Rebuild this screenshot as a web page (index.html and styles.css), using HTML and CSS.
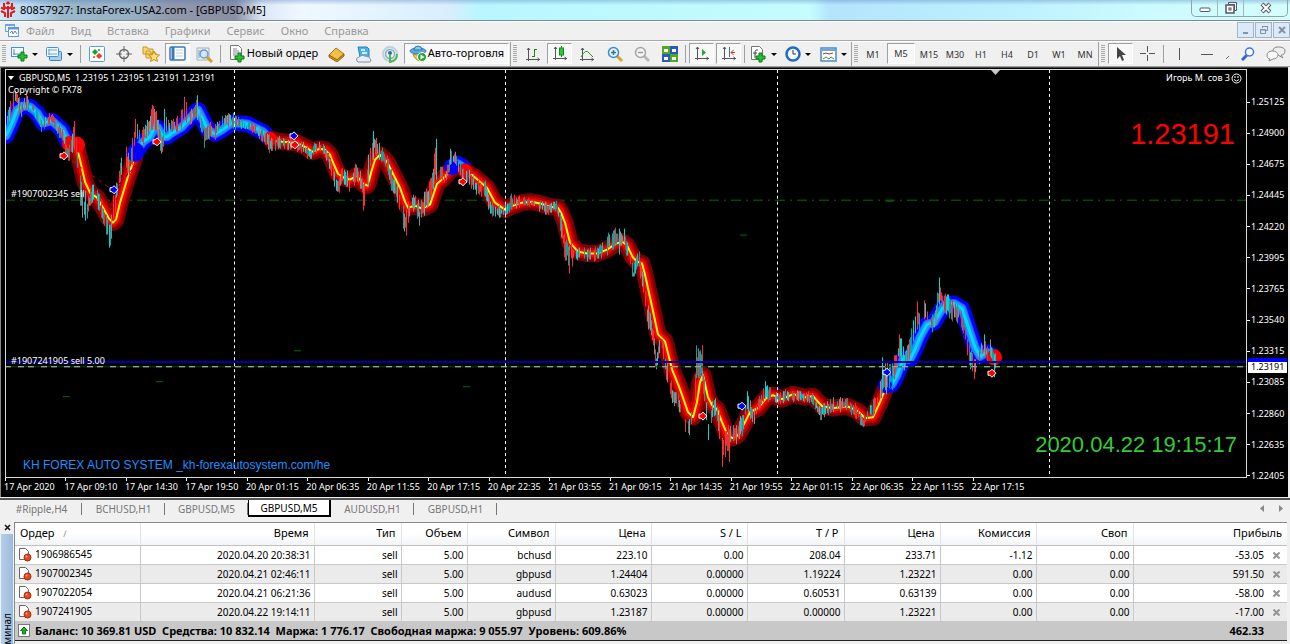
FILE: index.html
```html
<!DOCTYPE html>
<html lang="ru">
<head>
<meta charset="utf-8">
<title>80857927: InstaForex-USA2.com - [GBPUSD,M5]</title>
<link rel="stylesheet" href="styles.css">
</head>
<body>
<div class="app">
  <header class="titlebar">
    <svg class="logo" width="16" height="18" viewBox="0 0 16 18"><g fill="none" stroke="#e01818" stroke-width="2"><path d="M8 5v12M5 16v-4L1 10M11 16v-4l4-2M8 8L4 5.500V2M8 8l4-2.500V2M1 6.500l4 2M15 6.500l-4 2M6.500 3L8 1.500 9.500 3"/></g></svg>
    <h1 class="title">80857927: InstaForex-USA2.com - [GBPUSD,M5]</h1>
    <div class="winbtns">
      <button class="wb" aria-label="Свернуть"><svg width="12" height="10" viewBox="0 0 12 10"><rect x="1" y="5" width="10" height="3.500" rx="1" fill="#fff" stroke="#556"/></svg></button>
      <button class="wb" aria-label="Восстановить"><svg width="12" height="12" viewBox="0 0 12 12"><path d="M3.500 .5h8v8h-2v-6h-6z" fill="#fff" stroke="#556"/><rect x="1" y="3" width="8" height="8" fill="#fff" stroke="#556" stroke-width="1.500"/><rect x="4" y="6" width="2" height="2" fill="none" stroke="#556"/></svg></button>
      <button class="wb wide" aria-label="Закрыть"><svg width="12" height="12" viewBox="0 0 12 12"><path d="M2 2l8 8M10 2l-8 8" stroke="#556" stroke-width="4"/><path d="M2.500 2.500l7 7M9.500 2.500l-7 7" stroke="#fff" stroke-width="2"/></svg></button>
    </div>
  </header>

  <nav class="menubar">
    <svg width="15" height="15" viewBox="0 0 15 15"><rect x="1.500" y="1.500" width="9" height="7" fill="#eef5ff" stroke="#6ea4e0"/><path d="M1 2h10" stroke="#6ea4e0" stroke-width="2"/><rect x="4.500" y="4.500" width="10" height="9" fill="#fff" stroke="#5b98dc"/><path d="M4 5.500h11" stroke="#5b98dc" stroke-width="2"/><path d="M6 10l2-2 1 3 2-3 2 3" fill="none" stroke="#4a88d0"/></svg>
    <button>Файл</button><button>Вид</button><button>Вставка</button><button>Графики</button><button>Сервис</button><button>Окно</button><button>Справка</button>
    <div class="mdi">
      <button aria-label="Свернуть окно"><svg width="10" height="10" viewBox="0 0 10 10"><path d="M2 8h5" stroke="#8193a8" stroke-width="2"/></svg></button>
      <button aria-label="Восстановить окно"><svg width="10" height="10" viewBox="0 0 10 10"><path d="M3.500 3V1.500h5v4H7M3 1.500h6M1.500 4.500h5v4h-5zM1 5h6" fill="none" stroke="#8193a8"/></svg></button>
      <button aria-label="Закрыть окно"><svg width="10" height="10" viewBox="0 0 10 10"><path d="M2 2l6 6M8 2L2 8" stroke="#8193a8" stroke-width="2"/></svg></button>
    </div>
  </nav>

  <div class="toolbar">
    <div class="group g1"><i class="grip"></i>
      <button class="drop" aria-label="Новый график"><svg width="18" height="16" viewBox="0 0 18 16"><rect x="1.500" y="1.500" width="12" height="9" fill="#f4faff" stroke="#4d8fc8"/><path d="M4 3v6M3 8h9" stroke="#4d8fc8" fill="none"/><path d="M8 9h3V6h3v3h3v3h-3v3h-3v-3H8z" fill="#25c22e" stroke="#0b7a18"/></svg><b></b></button>
      <button class="drop" aria-label="Профили"><svg width="18" height="16" viewBox="0 0 18 16"><rect x="4.500" y="5.500" width="12" height="9" rx="1" fill="#a9cdf0" stroke="#3f82c0"/><rect x="1.500" y="1.500" width="12" height="9" rx="1" fill="#f0f8ff" stroke="#4d8fc8"/><path d="M3 4h9M3 8h9M4 3v6" stroke="#6aa6dc"/></svg><b></b></button>
      <i class="sep"></i>
      <button aria-label="Обзор рынка"><svg width="16" height="16" viewBox="0 0 16 16"><rect x=".5" y=".5" width="15" height="15" rx="1" fill="#fff" stroke="#5a9bd8"/><path d="M3 6l3-3 3 3-3 3z" fill="#18a035"/><path d="M7 10l3-3 3.500 3-3.500 3z" fill="#e2452b"/><circle cx="10" cy="4" r="1" fill="#18a035"/><circle cx="5" cy="11" r="1" fill="#e2452b"/></svg></button>
      <button aria-label="Окно данных"><svg width="16" height="16" viewBox="0 0 16 16"><circle cx="8" cy="8" r="4.500" fill="none" stroke="#666" stroke-width="1.500"/><path d="M8 0v6M8 10v6M0 8h6M10 8h6" stroke="#666"/></svg></button>
      <button aria-label="Навигатор"><svg width="18" height="16" viewBox="0 0 18 16"><path d="M1 1h4l1 2h5v5H1zM4 5h4l1 2h5v5H4z" fill="#f8d674" stroke="#c8962c"/><path d="M12 5l1.500 3.500 4 .5-3 2.500 1 4-3.500-2-3.500 2 1-4L6.500 9l4-.5z" fill="#ffe070" stroke="#c48a1c"/></svg></button>
      <button class="on" aria-label="Терминал"><svg width="17" height="15" viewBox="0 0 17 15"><rect x="1" y="1" width="15" height="13" rx="1" fill="#fff" stroke="#3979b8" stroke-width="1.500"/><path d="M4 1v13" stroke="#3979b8" stroke-width="3"/><path d="M7 4h7M7 7h7M7 10h7" stroke="#b5cfe8"/></svg></button>
      <button aria-label="Тестер"><svg width="17" height="17" viewBox="0 0 17 17"><path d="M1 2h12v12H1z" fill="#e9f1f8" stroke="#9bb0c2"/><path d="M3 4v8M5 9V4M10 12V6" stroke="#7a98b5"/><circle cx="8" cy="8" r="4" fill="#cfe7fa" fill-opacity=".8" stroke="#6a9cc8" stroke-width="1.500"/><path d="M11 11l5 5" stroke="#d39b2c" stroke-width="3"/></svg></button>
      <i class="sep"></i>
      <button class="order"><svg width="18" height="18" viewBox="0 0 18 18"><path d="M2.500 .5h8l3 3v11h-11z" fill="#fff" stroke="#777"/><path d="M5 4h4M5 6h6M5 8h6M5 10h4" stroke="#888"/><path d="M7 11h3V8h3v3h3v3h-3v3h-3v-3H7z" fill="#25c22e" stroke="#0b7a18"/></svg><span>Новый ордер</span></button>
      <button aria-label="Редактор"><svg width="17" height="15" viewBox="0 0 17 15"><path d="M1 8l7-7 8 6-7 6z" fill="#f3c043" stroke="#a6741a"/><path d="M1 8v2l8 5 7-6V7l-7 6z" fill="#d79a27" stroke="#94620f"/></svg></button>
      <button aria-label="Маркет"><svg width="17" height="17" viewBox="0 0 17 17"><path d="M3 1h9l2 2v8H5z" fill="#48b0ec" stroke="#2684c4"/><path d="M6 4h4M7 7h5" stroke="#fff" stroke-width="1.500"/><path d="M2 15q-2-3 2-4 3-3 6-1 5 0 6 4l-1 2H3z" fill="#e9f0f8" stroke="#7c92ac"/></svg></button>
      <button aria-label="Сигналы"><svg width="17" height="17" viewBox="0 0 17 17"><circle cx="8" cy="8" r="7" fill="none" stroke="#bcd3dc" stroke-width="2"/><circle cx="8" cy="8" r="4.500" fill="none" stroke="#7fb0cc" stroke-width="1.500"/><circle cx="8" cy="7" r="2" fill="#2f6f9c"/><path d="M8 8v8q7-1 7-8" fill="none" stroke="#52b452" stroke-width="2"/></svg></button>
      <button class="order auto"><svg width="18" height="18" viewBox="0 0 18 18"><ellipse cx="9" cy="6" rx="8" ry="3" fill="#5ba8dc" stroke="#327bb0"/><path d="M5 5q0-4 4-4t4 4z" fill="#83c7f0" stroke="#327bb0"/><path d="M4 9q4 2 9 0l-2 7q-5-1-7-7" fill="#f2c64e" stroke="#b3862a"/><circle cx="13" cy="12" r="4.500" fill="#22a83a" stroke="#fff"/><path d="M11.500 9.500v5l4-2.500z" fill="#fff"/></svg><span>Авто-торговля</span></button>
    </div>
    <div class="group g2"><i class="grip"></i>
      <button aria-label="Бары"><svg width="14" height="15" viewBox="0 0 14 15"><path d="M2.500 1v13M0 12.500h14M1 3l1.500-2L4 3M11.500 11l2 1.500-2 1.500" fill="none" stroke="#555"/><path d="M8.500 2v8M8 2.500h3M6 9.500h2" stroke="#168a22"/></svg></button>
      <button class="on" aria-label="Свечи"><svg width="14" height="15" viewBox="0 0 14 15"><path d="M2.500 1v13M0 12.500h14M1 3l1.500-2L4 3M11.500 11l2 1.500-2 1.500" fill="none" stroke="#555"/><path d="M8.500 0v11" stroke="#168a22"/><rect x="6.500" y="2" width="4" height="7" fill="#28cc38" stroke="#168a22"/></svg></button>
      <button aria-label="Линия"><svg width="14" height="15" viewBox="0 0 14 15"><path d="M2.500 1v13M0 12.500h14M1 3l1.500-2L4 3M11.500 11l2 1.500-2 1.500" fill="none" stroke="#555"/><path d="M1 10q5-9 8-4l4 4" fill="none" stroke="#229b30"/></svg></button>
      <i class="sep thin"></i>
      <button aria-label="Увеличить"><svg width="17" height="17" viewBox="0 0 17 17"><path d="M10 10l5 5" stroke="#d9a528" stroke-width="3"/><circle cx="6.500" cy="6.500" r="5" fill="#e4f5ff" stroke="#3f8bc4" stroke-width="1.500"/><path d="M4 6.500h5M6.500 4v5" stroke="#2673b5" stroke-width="1.500"/></svg></button>
      <button aria-label="Уменьшить"><svg width="17" height="17" viewBox="0 0 17 17"><path d="M10 10l5 5" stroke="#b9b9b9" stroke-width="3"/><circle cx="6.500" cy="6.500" r="5" fill="#f4f4f4" stroke="#a5a5a5" stroke-width="1.500"/><path d="M4 6.500h5" stroke="#999" stroke-width="1.500"/></svg></button>
      <button aria-label="Плитка"><svg width="16" height="16" viewBox="0 0 16 16"><path d="M0 0h8v8H0zM8 8h8v8H8z" fill="#52a81e"/><path d="M8 0h8v8H8zM0 8h8v8H0z" fill="#2858c0"/><path d="M2 3h4v3H2zM10 3h4v3h-4zM2 11h4v3H2zM10 11h4v3h-4z" fill="#fff"/></svg></button>
      <i class="sep"></i>
      <button class="on" aria-label="Автопрокрутка"><svg width="14" height="15" viewBox="0 0 14 15"><path d="M2.500 1v13M0 12.500h14M1 3l1.500-2L4 3M11.500 11l2 1.500-2 1.500" fill="none" stroke="#555"/><path d="M7 3v7l4-3.500z" fill="#23a636"/></svg></button>
      <button class="on" aria-label="Сдвиг"><svg width="14" height="15" viewBox="0 0 14 15"><path d="M2.500 1v13M0 12.500h14M1 3l1.500-2L4 3M11.500 11l2 1.500-2 1.500" fill="none" stroke="#555"/><path d="M7.500 1v10" stroke="#2d75b5"/><path d="M9 6.500h4M11.500 4L9 6.500 11.500 9" fill="none" stroke="#c63c1c"/></svg></button>
      <i class="sep"></i>
      <button class="drop" aria-label="Индикаторы"><svg width="18" height="17" viewBox="0 0 18 17"><path d="M2.500 .5h8l3 3v10h-11z" fill="#fff" stroke="#777"/><path d="M9 4q-3-1-3 3v5M4 7h4" fill="none" stroke="#444"/><path d="M7 10h3V7h3v3h3v3h-3v3h-3v-3H7z" fill="#25c22e" stroke="#0b7a18"/></svg><b></b></button>
      <button class="drop" aria-label="Периоды"><svg width="16" height="16" viewBox="0 0 16 16"><circle cx="8" cy="8" r="6.500" fill="#f4faff" stroke="#1f6cc0" stroke-width="2.500"/><path d="M8 4v4h3" fill="none" stroke="#334" /></svg><b></b></button>
      <button class="drop" aria-label="Шаблоны"><svg width="17" height="15" viewBox="0 0 17 15"><rect x="1" y="1" width="15" height="13" fill="#fff" stroke="#4a8ac4" stroke-width="1.500"/><path d="M1 3h15" stroke="#6aa8dc" stroke-width="2"/><path d="M3 7l3-1 3 1 4-1" fill="none" stroke="#a2392a"/><path d="M3 12l3-2 3 2 2-2 3 2" fill="none" stroke="#2f9e3a"/></svg><b></b></button>
    </div>
    <div class="group g3"><i class="grip"></i>
      <button>M1</button><button class="on">M5</button><button>M15</button><button>M30</button><button>H1</button><button>H4</button><button>D1</button><button>W1</button><button>MN</button>
    </div>
    <div class="group g4"><i class="grip"></i>
      <button class="on" aria-label="Курсор"><svg width="12" height="16" viewBox="0 0 12 16"><path d="M2 1v12l3-3 2 5 2-1-2-5h4z" fill="#444"/></svg></button>
      <button aria-label="Перекрестие"><svg width="16" height="16" viewBox="0 0 16 16"><path d="M7.500 0v6M7.500 9v6M0 7.500h6M9 7.500h6" stroke="#555"/></svg></button>
      <i class="sep"></i>
      <button aria-label="Вертикальная линия"><svg width="4" height="14" viewBox="0 0 4 14"><path d="M1.500 1v12" stroke="#555"/></svg></button>
      <button aria-label="Горизонтальная линия"><svg width="14" height="4" viewBox="0 0 14 4"><path d="M1 2.500h12" stroke="#555"/></svg></button>
      <svg class="corner" width="5" height="5" viewBox="0 0 5 5"><path d="M1 4l3-3" stroke="#666"/></svg>
      <button aria-label="Поиск"><svg width="14" height="14" viewBox="0 0 14 14"><path d="M6 8l-5 5" stroke="#2e63d8" stroke-width="3"/><circle cx="8.500" cy="5" r="4" fill="#fff" stroke="#3c74e4" stroke-width="1.500"/></svg></button>
      <button class="chat" aria-label="Чат"><svg width="20" height="16" viewBox="0 0 20 16"><path d="M12 1c4 0 7 1 7 4s-2 4-4 4l2 3-5-3c-3 0-5-1-5-4s2-4 5-4z" fill="#eee" stroke="#888"/><path d="M6 5c4 0 6 2 6 4s-2 4-5 4l-4 2 1-2c-2 0-3-2-3-4s2-4 5-4z" fill="#f7f7f7" stroke="#888"/></svg></button>
    </div>
  </div>

  <main class="chart">
    <div class="plot">
      <svg id="canvas" class="canvas" viewBox="6 70 1240 408" preserveAspectRatio="none"></svg>
      <div class="info"><p><i class="tri"></i>GBPUSD,M5&nbsp; 1.23195 1.23195 1.23191 1.23191</p><p>Copyright © FX78</p></div>
      <div class="expert">Игорь М. сов 3<svg width="11" height="11" viewBox="0 0 11 11"><circle cx="5.500" cy="5.500" r="4.500" fill="none" stroke="#fff"/><path d="M3 6.500q2.500 3 5 0M4 3v2M7 3v2" fill="none" stroke="#fff"/></svg></div>
      <div class="bid">1.23191</div>
      <div class="tag first">#1907002345 sell</div>
      <div class="tag second">#1907241905 sell 5.00</div>
      <div class="system">KH FOREX AUTO SYSTEM _kh-forexautosystem.com/he</div>
      <div class="clock">2020.04.22 19:15:17</div>
    </div>
    <div class="prices">
      <span>1.25125</span><span>1.24900</span><span>1.24675</span><span>1.24445</span><span>1.24220</span><span>1.23995</span><span>1.23765</span><span>1.23540</span><span>1.23315</span><span>1.23085</span><span>1.22860</span><span>1.22635</span><span>1.22405</span>
      <div class="now">1.23191</div>
    </div>
    <div class="times">
      <span>17 Apr 2020</span><span>17 Apr 09:10</span><span>17 Apr 14:30</span><span>17 Apr 19:50</span><span>20 Apr 01:15</span><span>20 Apr 06:35</span><span>20 Apr 11:55</span><span>20 Apr 17:15</span><span>20 Apr 22:35</span><span>21 Apr 03:55</span><span>21 Apr 09:15</span><span>21 Apr 14:35</span><span>21 Apr 19:55</span><span>22 Apr 01:15</span><span>22 Apr 06:35</span><span>22 Apr 11:55</span><span>22 Apr 17:15</span>
    </div>
  </main>

  <nav class="tabs">
    <button>#Ripple,H4</button><button>BCHUSD,H1</button><button>GBPUSD,M5</button><button class="active">GBPUSD,M5</button><button>AUDUSD,H1</button><button>GBPUSD,H1</button>
    <div class="scroll"><button aria-label="Назад"><svg width="5" height="7" viewBox="0 0 5 7"><path d="M4 0v7L0 3.500z" fill="#888"/></svg></button><button aria-label="Вперёд"><svg width="5" height="7" viewBox="0 0 5 7"><path d="M1 0v7l4-3.500z" fill="#888"/></svg></button></div>
  </nav>

  <section class="terminal">
    <aside class="side">
      <button class="x" aria-label="Закрыть терминал"><svg width="7" height="7" viewBox="0 0 7 7"><path d="M1 1l5 5M6 1L1 6" stroke="#111" stroke-width="1.500"/></svg></button>
      <div class="name"><span>минал</span></div>
    </aside>
    <div class="pane">
      <table>
        <colgroup><col class="c125"><col class="c174"><col class="c87"><col class="c66"><col class="c88"><col class="c96"><col class="c96"><col class="c97"><col class="c96"><col class="c96"><col class="c97"><col class="c154"></colgroup>
        <thead><tr><th>Ордер <i class="sort">∕</i></th><th>Время</th><th>Тип</th><th>Объем</th><th>Символ</th><th>Цена</th><th>S / L</th><th>T / P</th><th>Цена</th><th>Комиссия</th><th>Своп</th><th>Прибыль</th></tr></thead>
        <tbody id="orders">
          <tr><td>1906986545</td><td>2020.04.20 20:38:31</td><td>sell</td><td>5.00</td><td>bchusd</td><td>223.10</td><td>0.00</td><td>208.04</td><td>233.71</td><td>-1.12</td><td>0.00</td><td>-53.05</td></tr>
          <tr><td>1907002345</td><td>2020.04.21 02:46:11</td><td>sell</td><td>5.00</td><td>gbpusd</td><td>1.24404</td><td>0.00000</td><td>1.19224</td><td>1.23221</td><td>0.00</td><td>0.00</td><td>591.50</td></tr>
          <tr><td>1907022054</td><td>2020.04.21 06:21:36</td><td>sell</td><td>5.00</td><td>audusd</td><td>0.63023</td><td>0.00000</td><td>0.60531</td><td>0.63139</td><td>0.00</td><td>0.00</td><td>-58.00</td></tr>
          <tr><td>1907241905</td><td>2020.04.22 19:14:11</td><td>sell</td><td>5.00</td><td>gbpusd</td><td>1.23187</td><td>0.00000</td><td>0.00000</td><td>1.23221</td><td>0.00</td><td>0.00</td><td>-17.00</td></tr>
        </tbody>
      </table>
      <div class="summary">
        <svg width="12" height="13" viewBox="0 0 12 13"><rect x=".5" y=".5" width="11" height="12" fill="#fff" stroke="#777"/><path d="M6 3l3.500 3.500H7.500V10h-3V6.500h-2z" fill="#1fae2d" stroke="#0d7a1a"/></svg>
        <span>Баланс: 10 369.81 USD&nbsp; Средства: 10 832.14&nbsp; Маржа: 1 776.17&nbsp; Свободная маржа: 9 055.97&nbsp; Уровень: 609.86%</span>
        <span class="total">462.33</span>
      </div>
      <div class="foot"></div>
    </div>
  </section>
</div>
<script src="chart.js"></script>
</body>
</html>
```
FILE: chart.js
```js
const NS = "http://www.w3.org/2000/svg";
const canvas = document.getElementById("canvas");

function add(tag, attrs) {
  const el = document.createElementNS(NS, tag);
  for (const k in attrs) el.setAttribute(k, attrs[k]);
  canvas.appendChild(el);
}

function hline(y, color, width, dash) {
  add("path", { d: `M5 ${y}H1246`, stroke: color, "stroke-width": width, "stroke-dasharray": dash || "none", "shape-rendering": "crispEdges" });
}

// Session separators and price levels
hline(200.5, "#007000", 1, "10 5 2 5");
[[886, 201], [740, 235], [294, 351], [156, 382], [463, 387], [63, 397]].forEach(([x, y]) =>
  add("path", { d: `M${x} ${y + 0.5}h7`, stroke: "#007000" }));

// Moving-average ribbons
const up = [["#0000ff", 16], ["#1e60ff", 9], ["#1e90ff", 7], ["#00dcff", 3]];
const down = [["#7c0000", 17], ["#b80000", 11], ["#ff0000", 7], ["#ffff00", 2]];
const ribbons = [
  [up, "6,136 12,123 17,110 23,106 30,107 37,113 43,123 52,121 62,130 68,142"],
  [down, "76,145 80,160 85,182 90,193 97,198 103,208 109,219 113,223 116,220 120,203 127,180 135,157"],
  [up, "135,154 143,142 150,137 155,127 158,128 163,137 167,137 172,133 182,127 190,118 198,110 203,120 208,130 215,134 222,130 232,123 247,124 263,132 268,137"],
  [down, "272,140 282,142 297,143 307,148 312,152 320,149 325,150 330,155 334,165 338,174 344,178 350,180 357,176 363,184 367,186 369,181 371,173 375,160 380,155 387,162 392,172 400,188 405,202 408,208 415,206 422,209 430,205 433,196 437,184 443,179 451,170"],
  [up, "452,167 458,164 464,168"],
  [down, "466,172 473,176 480,182 487,188 495,203 505,210 513,206 522,203 532,202 541,204 550,207 558,208 561,213 565,223 570,243 578,252 587,254 597,254 607,250 616,244 622,242 627,246 633,258 637,262 642,264 645,275 652,307 658,335 661,338 665,342 672,370 680,390 688,413 693,418 697,403 700,383 703,376 708,398 712,406 717,410 722,423 728,437 733,439 738,436 745,423 750,413 758,409 767,398 773,396 782,400 793,395 805,398 813,397 822,407 833,409 847,407 858,412 865,419 873,418 880,403 885,390"],
  [up, "886,386 892,385 897,376 903,360 910,360 915,350 920,338 927,325 934,323 940,313 945,305 954,304 962,309 968,327 975,348 980,357 987,353 992,356"]
];
for (const [layers, points] of ribbons)
  for (const [color, width] of layers)
    add("polyline", { points, fill: "none", stroke: color, "stroke-width": width, "stroke-linejoin": "round", "stroke-linecap": width > 3 ? "round" : "butt" });

// Trend-change dots
[[70, 144, "#f00", 8], [77, 145, "#f00", 8], [136, 151, "#00f", 8], [270, 139, "#f00", 7], [452, 167, "#00f", 8],
 [465, 171, "#f00", 7], [886, 385, "#00f", 6], [994, 358, "#f00", 8]].forEach(([cx, cy, fill, r]) => add("circle", { cx, cy, r, fill }));

// Price bars: [x, centre, half range]
const price = [
  [5,130,6],[9,112,10],[13,98,8],[17,100,8],[21,110,7],[26,103,8],[32,107,5],[38,118,5],[42,130,7],[46,121,5],[52,119,6],[58,130,6],[64,140,8],
  [68,158,9],[71,148,9],[74,132,10],[76,150,12],[79,182,14],[82,205,14],[87,208,14],[90,200,10],[94,190,8],[99,203,8],[104,220,10],[110,234,12],
  [113,212,14],[118,182,12],[122,166,12],[124,152,12],[130,168,9],[133,142,14],[136,127,10],[141,138,8],[147,130,9],[152,117,11],[157,126,12],
  [162,146,12],[165,125,12],[170,128,6],[180,122,9],[184,108,12],[190,118,7],[197,104,9],[201,124,9],[204,139,9],[210,130,7],[214,134,7],[220,124,7],
  [226,120,6],[234,122,8],[245,125,4],[258,131,6],[268,142,8],[272,146,8],[278,142,6],[290,145,6],[302,147,5],[310,155,7],[315,147,7],[322,149,6],
  [328,158,6],[332,175,9],[337,190,8],[342,175,9],[350,185,9],[356,171,9],[360,180,8],[364,193,12],[369,165,14],[373,143,10],[378,150,8],[386,162,8],
  [391,180,10],[398,195,9],[403,220,12],[406,222,12],[410,205,8],[415,200,10],[419,215,10],[425,202,10],[431,190,14],[436,155,15],[439,172,9],
  [446,178,6],[450,158,10],[456,160,6],[462,172,9],[468,176,8],[476,187,8],[485,192,10],[490,207,9],[494,212,5],[504,212,6],[511,202,7],[530,203,4],
  [545,209,6],[556,206,5],[560,222,9],[565,250,12],[570,255,12],[578,255,7],[594,255,6],[606,246,9],[615,237,9],[624,239,9],[629,255,9],[633,275,6],
  [638,255,9],[643,285,12],[647,315,12],[652,335,12],[656,365,8],[661,338,8],[666,372,12],[672,395,8],[680,408,9],[687,430,9],[693,414,10],[696,370,20],
  [700,362,14],[703,382,18],[706,415,14],[708,430,9],[713,406,9],[718,420,14],[722,450,14],[727,440,12],[735,436,9],[742,425,10],[747,402,10],[753,418,8],
  [758,408,7],[764,392,8],[775,399,6],[785,397,7],[800,397,5],[812,400,6],[820,414,7],[834,406,7],[846,405,6],[856,412,7],[863,424,6],[870,412,7],
  [878,402,10],[882,385,20],[888,372,14],[891,382,12],[896,360,10],[900,345,12],[904,362,8],[909,350,10],[914,330,12],[917,317,10],[921,330,8],[925,310,9],
  [930,325,9],[934,325,8],[939,292,12],[943,302,8],[948,305,12],[953,313,10],[960,314,9],[966,340,9],[971,362,12],[974,368,8],[980,352,9],[985,352,9],[990,352,10],[995,362,9]
];
let seed = 11;
const rnd = () => (seed = (seed * 16807) % 2147483647) / 2147483647;
const colors = ["#00d8d8", "#ff3030", "#00a8ac", "#d83838", "#7f8f8f"];
let k = 0;
for (let x = 6; x <= 995; x += 1) {
  while (k < price.length - 2 && price[k + 1][0] < x) k++;
  const [x0, c0, h0] = price[k], [x1, c1, h1] = price[k + 1];
  const t = (x - x0) / (x1 - x0);
  const c = c0 + (c1 - c0) * t, h = h0 + (h1 - h0) * t;
  if (rnd() < 0.28) continue;
  const a = Math.round(c - h * (0.3 + rnd() * 0.9)), b = Math.round(c + h * (0.3 + rnd() * 0.9));
  add("path", { d: `M${x + 0.5} ${a}V${b}`, stroke: colors[Math.floor(rnd() * colors.length)], "shape-rendering": "crispEdges" });
}
// Longest wicks
[[13,91,110,1],[74,121,150,1],[109,225,248,0],[152,105,130,1],[164,109,140,0],[184,98,120,1],[197,96,120,0],[363,190,211,1],[373,131,160,0],[406,210,236,1],
 [436,139,180,0],[450,149,165,0],[569,250,274,1],[619,229,255,0],[702,346,372,1],[708,425,441,0],[722,440,468,1],[729,430,463,1],[765,382,400,0],
 [882,358,390,0],[899,335,360,1],[917,302,330,1],[924,301,320,1],[939,278,305,0],[974,360,380,1],[984,335,352,0],[994,355,378,0]].forEach(([x, a, b, c]) =>
  add("path", { d: `M${x + 0.5} ${a}V${b}`, stroke: colors[c], "shape-rendering": "crispEdges" }));

// Trades
add("path", { d: "M66 157L112 190", stroke: "#d00000", "stroke-dasharray": "4 4" });
add("path", { d: "M114 190L156 143", stroke: "#0000d0", "stroke-dasharray": "3 3" });
const marker = (x, y, fill) => add("path", { d: `M${x} ${y - 4}l4 4-4 4-2-2h-2v-4h2z`, fill, stroke: "#fff" });
[[64, 156, "#f00"], [114, 190, "#00f"], [157, 142, "#f00"], [294, 136, "#00f"], [295, 145, "#f00"], [463, 182, "#f00"], [703, 417, "#f00"],
 [742, 407, "#00f"], [887, 373, "#00f"], [992, 374, "#f00"]].forEach(m => marker(...m));

hline(363, "#0000a8", 2);
hline(367.5, "#005000", 1);
hline(367.5, "#c8c8c8", 1, "6 7 6 4");
[234, 505, 777, 1049].forEach(x => add("path", { d: `M${x + 0.5} 70V478`, stroke: "#fff", "stroke-dasharray": "3 3", "shape-rendering": "crispEdges" }));
add("path", { d: "M991 70h9l-4.500 5z", fill: "#c8c8c8" });

// Row icons and close buttons
const sheet = '<svg width="14" height="15" viewBox="0 0 14 15"><path d="M1.500 1.500h6l3 3v8h-9z" fill="#fff" stroke="#666"/><circle cx="9.500" cy="10.500" r="3.500" fill="#e04a1c" stroke="#a82a08"/><circle cx="8.500" cy="9.500" r="1" fill="#ffb090"/></svg>';
const cross = '<button class="close" aria-label="Закрыть ордер"><svg width="7" height="7" viewBox="0 0 7 7"><path d="M.5 .5l6 6M6.500 .5l-6 6" stroke="#929292" stroke-width="2"/></svg></button>';
for (const row of document.getElementById("orders").rows) {
  row.cells[0].insertAdjacentHTML("afterbegin", sheet);
  row.cells[11].insertAdjacentHTML("beforeend", cross);
}
```
FILE: styles.css
```css
* { box-sizing: border-box; }
body { margin: 0; font-family: "Noto Sans", "Open Sans", sans-serif; font-size: 11px; color: #000; background: #f0f0f0; }
button { font: inherit; color: inherit; background: none; border: 0; padding: 0; margin: 0; }
p, h1 { margin: 0; font-weight: normal; }
svg { display: block; flex: none; }
.app { display: flex; flex-direction: column; height: 100vh; overflow: hidden; }

.titlebar { flex: none; height: 21px; display: flex; align-items: center; gap: 4px; border-bottom: 1px solid #6f8e95; background: linear-gradient(rgba(70, 120, 180, .35), transparent 5px), linear-gradient(90deg, #d4e8fb 0, #b9d8ee 30px, #9cb8cc 60px, #98b0c4 130px, #9298ac 170px, #8a8ea6 235px, #dce6f4 262px, #f0f8ff 300px, #d8eeff 450px, #b8f6ff 480px, #c4fcff 810px, #b4e4fc 830px, #bcf0ff 1000px, #ccfbff 1150px, #d4fdfc 100%); }
.title { flex: 1; font-size: 11px; line-height: 18px; white-space: nowrap; }
.winbtns { display: flex; align-self: flex-start; height: 17px; margin-right: 2px; border: 1px solid #8da6ad; border-top: 0; border-radius: 0 0 5px 5px; }
.wb { width: 26px; display: grid; place-items: center; border-right: 1px solid #9fb7bd; }
.wb.wide { width: 43px; border: 0; }

.menubar { flex: none; height: 20px; display: flex; align-items: center; gap: 16px; padding: 0 0 2px 4px; color: #999; border-top: 1px solid #fff; border-bottom: 1px solid #a8a8a8; }
.menubar svg { margin-right: -9px; }
.mdi { margin-left: auto; display: flex; gap: 1px; }
.mdi button { width: 17px; height: 16px; display: grid; place-items: center; border: 1px solid #9db4cc; background: #dce9f7; }
.mdi svg { margin: 0; }

.toolbar { flex: none; height: 26px; display: flex; border-top: 1px solid #fff; border-bottom: 1px solid #a0a0a0; background: #f0f0f0; }
.group { display: flex; align-items: stretch; flex: none; border-right: 1px solid #a0a0a0; }
.g1 { width: 511px; } .g2 { width: 341px; } .g3 { width: 247px; } .g4 { flex: 1; border: 0; }
.group > button { width: 27px; flex: none; display: flex; align-items: center; justify-content: center; }
.grip { width: 4px; margin: 3px 2px 3px 2px; flex: none; background: repeating-linear-gradient(180deg, #aaa 0 1px, #f0f0f0 1px 2px); }
.sep { width: 5px; flex: none; margin: 3px 0; background: linear-gradient(90deg, transparent 2px, #a0a0a0 2px 3px, transparent 3px); }
.sep.thin { width: 2px; }
.group > .on, .group > .auto { border: 1px solid #a0a0a0; border-right-color: #fff; border-bottom-color: #fff; background: #f8f8f8; margin: 1px 1px 2px 1px; width: 25px; }
.group > .drop { width: 35px; gap: 4px; padding-right: 3px; }
.drop b { border: 3px solid transparent; border-top-color: #000; border-bottom: 0; }
.group > .order { width: 100px; gap: 1px; white-space: nowrap; line-height: 14px; }
.order span { padding-bottom: 2px; }
.group > .auto { width: 105px; margin: 1px 0 2px; }
.g3 > button, .group.g3 > .on { flex: 1; width: auto; font-size: 9px; color: #333; }
.corner { margin: auto 4px 6px auto; }
.group > .chat { width: 29px; }

.chart { flex: 1; min-height: 0; position: relative; display: grid; grid-template: minmax(0, 1fr) 19px / minmax(0, 1fr) 41px; padding: 1px 0 0 4px; margin-right: 2px; background: #000; border-left: 1px solid #888; border-top: 1px solid #444; color: #fff; font-size: 9px; line-height: 12px; }
.plot { position: relative; min-width: 0; border: 1px solid #d8d8d8; overflow: hidden; }
.canvas { width: 100%; height: 100%; }
.plot > div { position: absolute; white-space: nowrap; }
.info { left: 2px; top: 2px; }
.tri { display: inline-block; border: 3px solid transparent; border-top: 4px solid #fff; border-bottom: 0; margin: 0 5px 1px 0; }
.expert { right: 4px; top: 2px; display: flex; align-items: center; gap: 1px; }
.bid { right: 11px; top: 47px; font: 29px/34px "Liberation Sans", Arial, sans-serif; color: #f00; }
.tag { left: 5px; }
.first { top: 29%; } .second { top: 70%; }
.system { left: 17px; bottom: 3px; font: 12px/18px "Liberation Sans", Arial, sans-serif; color: #1e90ff; }
.clock { right: 9px; bottom: 18px; font: 22px/28px "Liberation Sans", Arial, sans-serif; color: #32cd32; }
.prices { position: relative; display: flex; flex-direction: column; justify-content: space-between; padding: 27px 0 0; margin-bottom: -4px; }
.prices span { display: block; padding-left: 4px; background: linear-gradient(#fff, #fff) 0 50% / 3px 1px no-repeat; }
.now { position: absolute; top: 70%; left: 1px; right: 1px; padding: 4px 0 1px 3px; line-height: 10px; color: #000; background: linear-gradient(#00f 4px, #fff 4px); }
.times { grid-column: 1 / -1; display: flex; min-width: 0; margin-left: -1px; }
.times span { flex: 0 0 4.710%; white-space: nowrap; padding-top: 3px; background: linear-gradient(#fff, #fff) 1px 0 / 1px 3px no-repeat; }

.tabs { flex: none; height: 22px; display: flex; align-items: flex-start; padding-left: 1px; margin-top: 1px; border-top: 2px solid #555; color: #777; font-size: 10px; background: #f0f0f0; }
.tabs > button { width: 83px; height: 17px; background: linear-gradient(#777, #777) 100% 50% / 1px 12px no-repeat; }
.tabs > button:first-child { width: 81px; }
.tabs > .active { color: #000; background: #fff; border: solid #000; border-width: 0 2px 2px 1px; }
.scroll { margin-left: auto; display: flex; gap: 13px; padding: 5px 7px 0 0; }

.terminal { flex: none; display: flex; height: 124px; background: #f0f0f0; }
.side { width: 14px; flex: none; display: flex; flex-direction: column; }
.x { height: 14px; display: grid; place-items: center; }
.name { flex: 1; margin: 0 1px; background: linear-gradient(90deg, #b5cfeb, #9bbbdd); display: flex; align-items: flex-end; justify-content: center; font-size: 10px; line-height: 12px; }
.name span { writing-mode: vertical-rl; transform: rotate(180deg); }
.pane { flex: 1; min-width: 0; display: flex; flex-direction: column; margin: 2px 3px 0 0; border: 1px solid #888; border-width: 1px 0 0 1px; background: #fff; }
table { width: 100%; table-layout: fixed; border-collapse: collapse; font-size: 10px; }
.c125 { width: 125px; } .c174 { width: 174px; } .c87 { width: 87px; } .c66 { width: 66px; } .c88 { width: 88px; }
.c96 { width: 96px; } .c97 { width: 97px; } .c154 { width: 154px; }
th { height: 22px; padding: 0 5px 2px; font-size: 11px; font-weight: normal; text-align: right; border-right: 1px solid #e0e3e8; border-bottom: 1px solid #c0c0c0; background: linear-gradient(#fff 45%, #f1f3f6); }
td { height: 19px; padding: 0 3px; line-height: 14px; text-align: right; border-right: 1px solid #c8c8c8; border-bottom: 1px solid #c8c8c8; white-space: nowrap; }
th:first-child, td:first-child { text-align: left; }
.sort { margin-left: 6px; color: #888; font-style: normal; font-size: 9px; }
td svg { display: inline-block; vertical-align: middle; margin-right: 3px; }
tr:nth-child(even) td { background: #ebebeb; }
td:last-child, th:last-child { border-right: 0; }
td .close { margin: 0 4px 0 9px; }
td .close svg { margin: 0; }
.summary { flex: none; height: 18px; display: flex; align-items: center; gap: 5px; padding: 0 23px 0 3px; font-size: 11px; font-weight: bold; background: #c8c8c8; white-space: nowrap; }
.total { margin-left: auto; }
.foot { flex: 1; border-top: 1px solid #222; background: #f0f0f0; }
```
